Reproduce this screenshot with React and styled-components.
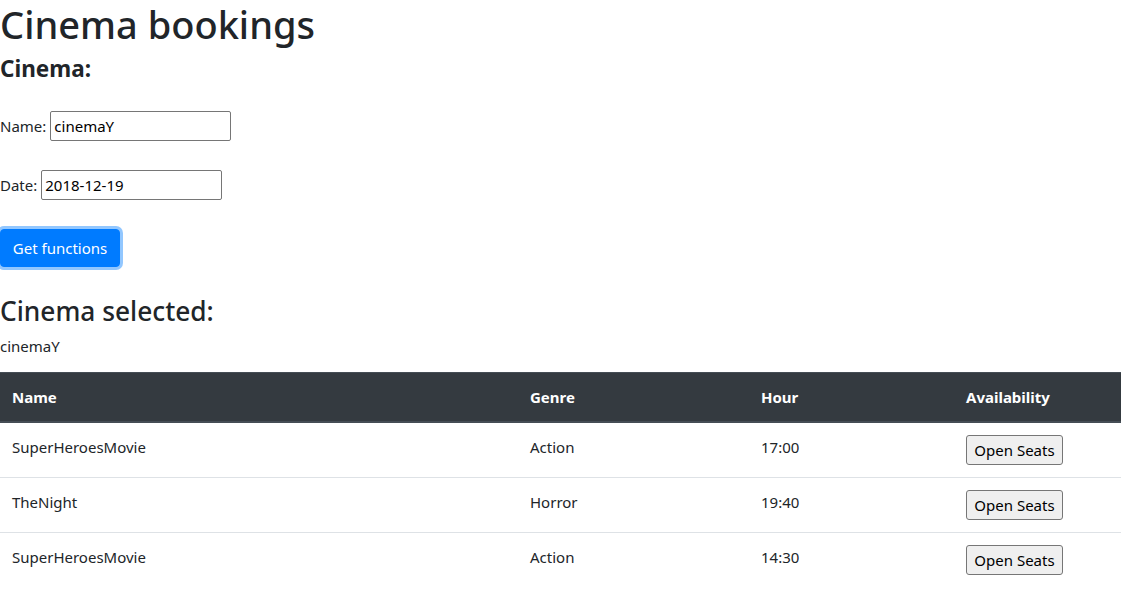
import React from 'react';
import styled, { createGlobalStyle } from 'styled-components';

const GlobalStyle = createGlobalStyle`
  body {
    margin: 0;
    font-family: "Noto Sans", "Open Sans", sans-serif;
    font-size: 15px;
    line-height: 24px;
    color: #212529;
    background: #fff;
  }
  * { box-sizing: border-box; }
`

const Page = styled.div`
  width: 100%;
`

const Title = styled.h1`
  margin: 0 0 8px;
  font-size: 38px;
  font-weight: 500;
  line-height: 48px;
`

const SectionTitle = styled.h4`
  margin: 0 0 10px;
  font-size: 22.5px;
  font-weight: 700;
  line-height: 26.8px;
`

const Form = styled.div`
  display: flex;
  flex-direction: column;
  align-items: flex-start;
  gap: 29px;
  padding-top: 18px;
`

const Row = styled.div`
  display: flex;
  align-items: center;
  height: 30px;
`

const Label = styled.label`
  margin-right: 4px;
`

const TextInput = styled.input`
  width: 181px;
  height: 30px;
  padding: 2px 3px;
  border: 1px solid #767676;
  border-radius: 2px;
  font: inherit;
  color: #000;
  background: #fff;
`

const PrimaryButton = styled.button`
  height: 38px;
  width: 120px;
  padding: 6px 0;
  border: 1px solid #007bff;
  border-radius: 4px;
  background: #007bff;
  color: #fff;
  font: inherit;
  box-shadow: 0 0 0 3px rgba(38, 143, 255, 0.5);
`

const Subtitle = styled.h3`
  margin: 28px 0 6px;
  font-size: 26.3px;
  font-weight: 500;
  line-height: 33.6px;
`

const Selected = styled.p`
  margin: 0 0 14px;
`

const Table = styled.table`
  width: 100%;
  border-collapse: collapse;
`

const Th = styled.th`
  width: ${p => p.w}px;
  padding: 12px;
  text-align: left;
  font-weight: 700;
  color: #fff;
  background: #343a40;
  border-top: 1px solid #454d55;
  border-bottom: 2px solid #454d55;
`

const Td = styled.td`
  padding: 12px;
  vertical-align: top;
  border-top: 1px solid #dee2e6;
`

const SeatButton = styled.button`
  width: 97px;
  height: 30px;
  padding: 2px 0;
  border: 1px solid #767676;
  border-radius: 3px;
  background: #efefef;
  color: #000;
  font: inherit;
  line-height: 24px;
`

const columns = [
  { label: 'Name', w: 518 },
  { label: 'Genre', w: 231 },
  { label: 'Hour', w: 205 },
  { label: 'Availability', w: 167 },
];

const functions = [
  { name: 'SuperHeroesMovie', genre: 'Action', hour: '17:00' },
  { name: 'TheNight', genre: 'Horror', hour: '19:40' },
  { name: 'SuperHeroesMovie', genre: 'Action', hour: '14:30' },
];

const App = () => {
  return (
    <Page>
      <GlobalStyle />
      <Title>Cinema bookings</Title>
      <SectionTitle>Cinema:</SectionTitle>

      <Form>
        <Row>
          <Label>Name:</Label>
          <TextInput defaultValue="cinemaY" />
        </Row>
        <Row>
          <Label>Date:</Label>
          <TextInput defaultValue="2018-12-19" />
        </Row>
        <PrimaryButton>Get functions</PrimaryButton>
      </Form>

      <Subtitle>Cinema selected:</Subtitle>
      <Selected>cinemaY</Selected>

      <Table>
        <thead>
          <tr>
            {columns.map(c => <Th key={c.label} w={c.w}>{c.label}</Th>)}
          </tr>
        </thead>
        <tbody>
          {functions.map((f, i) => (
            <tr key={i}>
              <Td>{f.name}</Td>
              <Td>{f.genre}</Td>
              <Td>{f.hour}</Td>
              <Td><SeatButton>Open Seats</SeatButton></Td>
            </tr>
          ))}
        </tbody>
      </Table>
    </Page>
  )
}

export default App
